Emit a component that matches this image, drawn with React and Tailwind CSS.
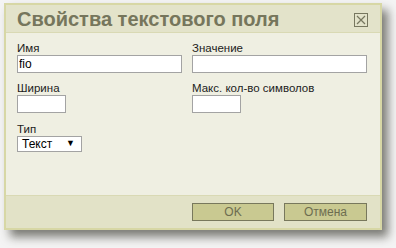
import React from "react";

const Field = ({ label, width, value = "" }) => (
  <div className="flex flex-col">
    <label className="text-[11.5px] leading-[14px] text-[#1c1c1c]">{label}</label>
    <input
      readOnly
      value={value}
      className={`${width} h-[18px] border border-[#a3a3a3] bg-white px-[1px] text-[12px] text-black outline-none`}
    />
  </div>
);

export default function App() {
  return (
    <div
      className="w-[396px] h-[248px] bg-[#f4f4f4] pl-[4px] pt-[3px]"
      style={{ fontFamily: "'Liberation Sans', Arial, sans-serif" }}
    >
      <div className="w-[378px] h-[227px] border-2 border-[#d7d7a5] bg-[#efefe2] flex flex-col shadow-[6px_7px_9px_rgba(60,60,50,0.65)]">
        <div className="h-[28px] bg-[#e3e3ca] border-b border-[#d9d9b4] flex items-center justify-between pl-[11px] pr-[12px]">
          <span className="text-[20px] font-bold text-[#76765c] leading-none">
            Свойства текстового поля
          </span>
          <svg width="14" height="14" viewBox="0 0 14 14" className="mt-[2px]">
            <rect x="0.5" y="0.5" width="13" height="13" fill="none" stroke="#77775f" />
            <path d="M3 3 L11 11 M11 3 L3 11" stroke="#77775f" strokeWidth="1.2" />
          </svg>
        </div>

        <div className="flex-1 pl-[11px] pt-[8px] grid grid-cols-[165px_175px] gap-x-[10px] content-start">
          <Field label="Имя" width="w-[165px]" value="fio" />
          <Field label="Значение" width="w-[175px]" />
          <div className="mt-[8px]">
            <Field label="Ширина" width="w-[49px]" />
          </div>
          <div className="mt-[8px]">
            <Field label="Макс. кол-во символов" width="w-[49px]" />
          </div>
          <div className="mt-[9px] flex flex-col">
            <label className="text-[11.5px] leading-[14px] text-[#1c1c1c]">Тип</label>
            <div className="w-[65px] h-[16px] border border-[#a3a3a3] bg-white flex items-center justify-between pl-[4px] pr-[6px] text-[12px] text-black">
              <span>Текст</span>
              <span className="text-[9px]">▼</span>
            </div>
          </div>
        </div>

        <div className="h-[33px] bg-[#e2e2c7] border-t border-[#d9d9b4] flex items-center justify-end gap-[10px] pr-[13px]">
          <button className="w-[82px] h-[18px] border border-[#78785c] bg-[#c9c991] text-[12px] text-[#6d6d50] leading-none">
            OK
          </button>
          <button className="w-[83px] h-[18px] border border-[#78785c] bg-[#c9c991] text-[12px] text-[#6d6d50] leading-none">
            Отмена
          </button>
        </div>
      </div>
    </div>
  );
}
